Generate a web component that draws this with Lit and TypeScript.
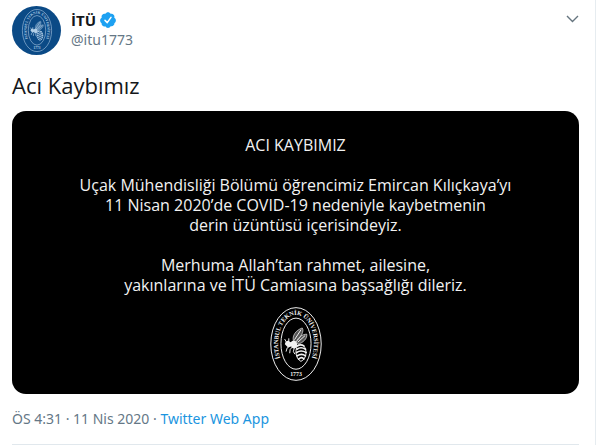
import { LitElement, html, css } from "lit";
import { customElement } from "lit/decorators.js";

@customElement("university-seal")
class UniversitySeal extends LitElement {
  static styles = css`
    :host { display: block; }
    .seal { display: block; width: 100%; height: 100%; overflow: visible; }
    .ring { fill: none; stroke: currentColor; stroke-width: 3; }
    .lettering { fill: currentColor; font: 700 19px "Liberation Serif", serif; }
    .year { font-size: 18px; }
    .body { fill: currentColor; }
    .wing { fill: currentColor; fill-opacity: 0.35; stroke: currentColor; stroke-width: 2; }
    .line { fill: none; stroke: currentColor; stroke-width: 3; stroke-linecap: round; }
    .stripe { stroke-width: 5; }
  `;

  render() {
    return html`
      <svg class="seal" viewBox="34 18 158 226" role="img" aria-label="İTÜ">
        <ellipse class="ring" cx="113" cy="131" rx="77" ry="111"></ellipse>
        <ellipse class="ring" cx="113" cy="130" rx="46" ry="78"></ellipse>
        <path id="arc" fill="none" d="M113 220 A55 89 0 0 1 113 42 A55 89 0 0 1 113 220"></path>
        <text class="lettering" text-anchor="middle">
          <textPath href="#arc" startOffset="50%">İSTANBUL TEKNİK ÜNİVERSİTESİ</textPath>
        </text>
        <text class="lettering year" x="113" y="230" text-anchor="middle">1773</text>
        <path class="wing" d="M105 121 C101 106 112 89 132 82 C139 91 128 111 113 124Z"></path>
        <path class="wing" d="M114 126 C119 110 132 101 146 101 C148 115 134 127 119 132Z"></path>
        <path class="line" d="M109 117 L128 88 M119 125 L140 106"></path>
        <path class="body" d="M79 132 C80 121 91 117 96 126 L103 121 C112 119 119 127 116 139 C112 147 101 147 98 138 L88 141Z"></path>
        <path class="line" d="M83 124 L79 117 M91 121 L91 115 M98 136 L86 143 L83 153 M102 140 L95 148 L94 158 M108 142 L105 154 L109 161"></path>
        <path class="line stripe" d="M117 137 Q128 130 137 137 M116 147 Q128 138 142 147 M115 157 Q128 148 144 157 M117 167 Q130 158 142 167 M121 177 Q131 168 137 177"></path>
        <path class="line" d="M117 136 C108 155 114 177 128 184 C145 178 149 148 136 136"></path>
      </svg>
    `;
  }
}

@customElement("app-root")
class AppRoot extends LitElement {
  static styles = css`
    :host {
      display: block;
      color: #14171a;
      background: #ffffff;
      font-family: "Open Sans", "Noto Sans", sans-serif;
    }
    .tweet {
      box-sizing: border-box;
      padding: 6px 16px 0 12px;
      border-right: 1px solid #e6ecf0;
    }
    .head { display: flex; align-items: flex-start; gap: 10px; }
    .avatar {
      flex: none;
      display: grid;
      place-items: center;
      width: 49px;
      height: 49px;
      border-radius: 50%;
      background: #0b4a86;
      color: #b4d0e8;
    }
    .avatar-seal { width: 30px; height: 43px; }
    .names { flex: 1; padding-top: 4px; }
    .name-row { display: flex; align-items: center; gap: 3px; height: 20px; }
    .name { font-size: 15px; line-height: 20px; font-weight: 700; }
    .badge { width: 18px; height: 18px; }
    .handle { display: block; color: #657786; font-family: "Noto Sans", sans-serif; font-size: 14px; line-height: 20px; text-decoration: none; }
    .more {
      margin: 0;
      padding: 6px 0;
      border: 0;
      background: none;
      color: #66757f;
    }
    .chevron { display: block; width: 13px; height: 13px; }
    .title { margin: 14px 0 10px; font-size: 22px; line-height: 32px; font-weight: 400; }
    .card {
      box-sizing: border-box;
      padding: 24px 16px 13px;
      border-radius: 14px;
      background: #000000;
      color: #f2f2f2;
      font-family: "Open Sans", sans-serif;
      font-size: 16px;
      line-height: 20px;
      text-align: center;
    }
    .card p { margin: 0 0 20px; }
    .card .last { margin-bottom: 12px; }
    .card-seal { width: 52px; height: 74px; margin: 0 auto; }
    .meta {
      margin: 0;
      padding: 15px 0 15px;
      border-bottom: 1px solid #e1e8ed;
      color: #657786;
      font-family: "Noto Sans", sans-serif;
      font-size: 14px;
      line-height: 20px;
    }
    .source { color: #1b95e0; text-decoration: none; }
  `;

  render() {
    return html`
      <article class="tweet">
        <header class="head">
          <div class="avatar"><university-seal class="avatar-seal"></university-seal></div>
          <div class="names">
            <div class="name-row">
              <span class="name">İTÜ</span>
              <svg class="badge" viewBox="0 0 24 24" role="img" aria-label="Onaylanmış hesap">
                <path fill="#1da1f2" d="M22.5 12.5c0-1.58-.875-2.95-2.148-3.6.154-.435.238-.905.238-1.4 0-2.21-1.71-3.998-3.818-3.998-.47 0-.92.084-1.336.25C14.818 2.415 13.51 1.5 12 1.5s-2.816.917-3.437 2.25c-.415-.165-.866-.25-1.336-.25-2.11 0-3.818 1.79-3.818 4 0 .494.083.964.237 1.4-1.272.65-2.147 2.018-2.147 3.6 0 1.495.782 2.798 1.942 3.486-.02.17-.032.34-.032.514 0 2.21 1.708 4 3.818 4 .47 0 .92-.086 1.335-.25.62 1.334 1.926 2.25 3.437 2.25 1.512 0 2.818-.916 3.437-2.25.415.163.865.248 1.336.248 2.11 0 3.818-1.79 3.818-4 0-.174-.012-.344-.033-.513 1.158-.687 1.943-1.99 1.943-3.484z"></path>
                <path fill="none" stroke="#ffffff" stroke-width="2" stroke-linecap="round" stroke-linejoin="round" d="M8 12.5l3 3 5-7"></path>
              </svg>
            </div>
            <a class="handle" href="#itu1773">@itu1773</a>
          </div>
          <button class="more" type="button" aria-label="Daha fazla">
            <svg class="chevron" viewBox="0 0 13 13"><path fill="none" stroke="currentColor" stroke-width="1.4" d="M1 4l5.5 5.5L12 4"></path></svg>
          </button>
        </header>
        <h1 class="title">Acı Kaybımız</h1>
        <section class="card">
          <p>ACI KAYBIMIZ</p>
          <p>Uçak Mühendisliği Bölümü öğrencimiz Emircan Kılıçkaya’yı<br />11 Nisan 2020’de COVID-19 nedeniyle kaybetmenin<br />derin üzüntüsü içerisindeyiz.</p>
          <p class="last">Merhuma Allah’tan rahmet, ailesine,<br />yakınlarına ve İTÜ Camiasına başsağlığı dileriz.</p>
          <university-seal class="card-seal"></university-seal>
        </section>
        <p class="meta">ÖS 4:31 · 11 Nis 2020 · <a class="source" href="#source">Twitter Web App</a></p>
      </article>
    `;
  }
}
